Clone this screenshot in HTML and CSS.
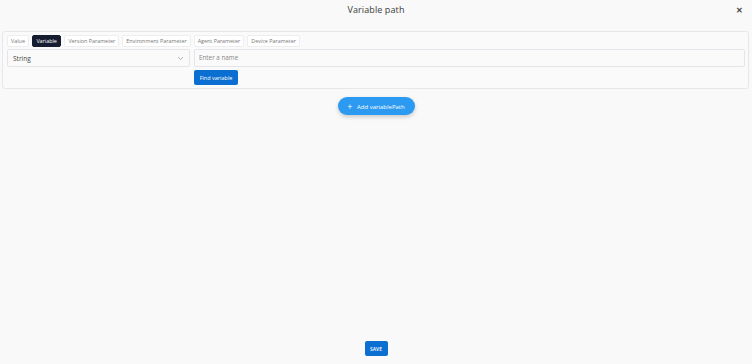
FILE: index.html
```html
<!DOCTYPE html>
<html>
<head>
    <title>Variable path</title>
    <link rel="stylesheet" href="styles.css">
</head>
<body>
    <div class="dialog">
        <div class="header">
            <h1>Variable path</h1>
            <span class="close">&#x2715;</span>
        </div>

        <div class="panel">
            <div class="tabs">
                <span class="tab">Value</span>
                <span class="tab active">Variable</span>
                <span class="tab">Version Parameter</span>
                <span class="tab">Environment Parameter</span>
                <span class="tab">Agent Parameter</span>
                <span class="tab">Device Parameter</span>
            </div>
            <div class="fields">
                <div class="select">
                    <span>String</span>
                    <svg width="7" height="5" viewBox="0 0 7 5"><path d="M1 1l2.5 2.5L6 1" fill="none" stroke="#9aa0a8" stroke-width="0.8"/></svg>
                </div>
                <div class="name-col">
                    <div class="input">Enter a name</div>
                    <button class="btn-find">Find variable</button>
                </div>
            </div>
        </div>

        <div class="add-row">
            <button class="btn-add"><span class="plus">+</span> Add variablePath</button>
        </div>

        <div class="footer">
            <button class="btn-save">SAVE</button>
        </div>
    </div>
</body>
</html>
```

FILE: styles.css
```css
body {
    margin: 0;
    font-family: "Open Sans", sans-serif;
    background-color: #f9f9f9;
    color: #333;
}
.dialog {
    height: 364px;
    display: flex;
    flex-direction: column;
}
.header {
    position: relative;
    height: 21px;
    text-align: center;
}
h1 {
    margin: 0;
    padding-top: 3px;
    line-height: 13px;
    font-size: 9px;
    font-weight: 500;
    letter-spacing: 0.1px;
    color: #3a3a3a;
}
.close {
    position: absolute;
    right: 9px;
    top: 5px;
    font-size: 8px;
    line-height: 10px;
    font-weight: bold;
    color: #444;
}
.panel {
    margin: 10px 3px 0 2px;
    padding: 3px 3px 3px 4px;
    border: 1px solid #e7e7ea;
    border-radius: 3px;
    background-color: #fafafa;
}
.tabs {
    display: flex;
    gap: 3px;
}
.tab {
    height: 10px;
    line-height: 10px;
    padding: 0 3px;
    font-size: 5.4px;
    color: #777;
    background-color: #fff;
    border: 1px solid #eeeef0;
    border-radius: 2px;
}
.tab.active {
    background-color: #161d30;
    color: #fff;
    border-color: #161d30;
    padding: 0 3.5px;
}
.fields {
    display: flex;
    gap: 4px;
    margin-top: 2px;
}
.select {
    width: 171px;
    height: 16px;
    padding: 0 5px;
    display: flex;
    align-items: center;
    justify-content: space-between;
    border: 1px solid #e3e5ea;
    border-radius: 2px;
    background-color: #fafafa;
    font-size: 6.5px;
    color: #444;
}
.name-col {
    flex: 1;
}
.input {
    height: 16px;
    line-height: 16px;
    padding: 0 4px;
    border: 1px solid #e3e5ea;
    border-radius: 2px;
    background-color: #fafafa;
    font-size: 6.3px;
    color: #888;
}
.btn-find {
    display: block;
    margin-top: 3px;
    width: 44px;
    height: 15px;
    border: none;
    border-radius: 2px;
    background-color: #0a6fd1;
    color: #fff;
    font-family: "Open Sans", sans-serif;
    font-size: 5.5px;
    padding: 0;
}
.add-row {
    display: flex;
    justify-content: center;
    margin-top: 8px;
}
.btn-add {
    width: 77px;
    height: 18px;
    border: none;
    border-radius: 9px;
    background-color: #2b9af0;
    color: #fff;
    font-family: "Open Sans", sans-serif;
    font-size: 6px;
    font-weight: 500;
    padding: 0;
    box-shadow: 0 2px 4px rgba(0, 0, 0, 0.2);
}
.plus {
    font-size: 9px;
    vertical-align: -1px;
    margin-right: 3px;
}
.footer {
    margin-top: auto;
    margin-bottom: 8px;
    display: flex;
    justify-content: center;
}
.btn-save {
    width: 23px;
    height: 15px;
    border: none;
    border-radius: 2px;
    background-color: #0a6fd1;
    color: #fff;
    font-family: "Open Sans", sans-serif;
    font-size: 5px;
    font-weight: 600;
    padding: 0;
}
```
